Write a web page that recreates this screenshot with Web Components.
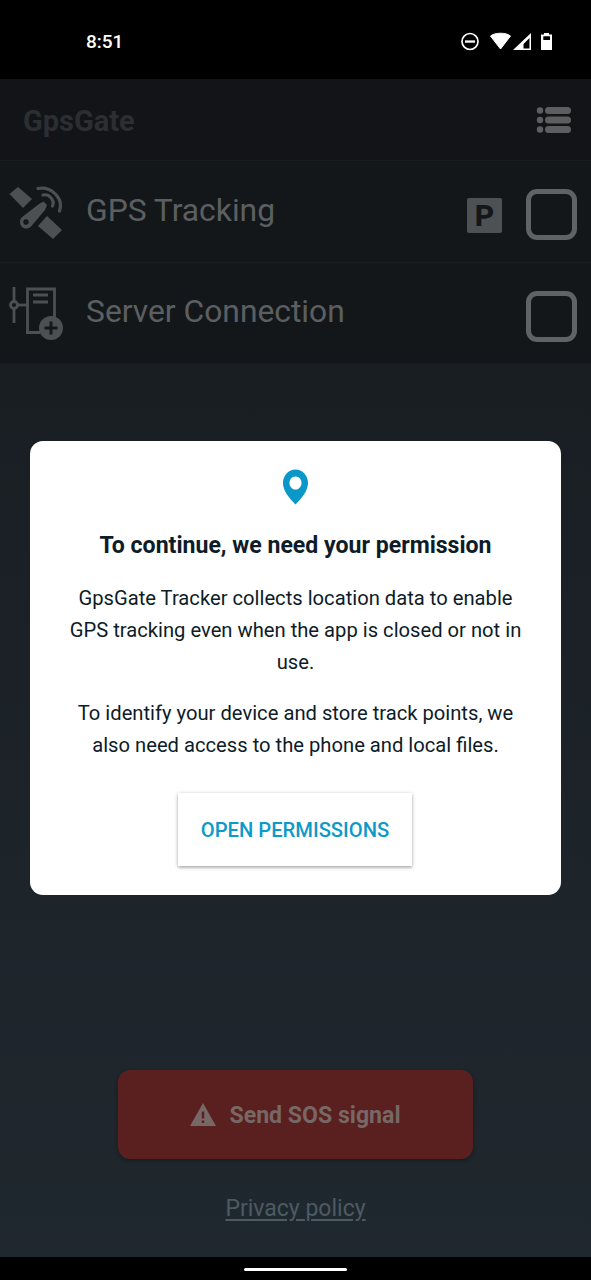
<!DOCTYPE html>
<html><head><meta charset="utf-8"><style>
html,body{margin:0;padding:0;background:#000}
body{width:591px;height:1280px;overflow:hidden;font-family:Roboto,sans-serif;position:relative}
</style></head><body>
<gg-app>
<gg-status slot="status"></gg-status>
<gg-header slot="header"></gg-header>
<gg-row slot="rows" label="GPS Tracking" kind="gps" parked></gg-row>
<gg-row slot="rows" label="Server Connection" kind="server"></gg-row>
<gg-sos slot="bottom"></gg-sos>
<gg-dialog slot="overlay"></gg-dialog>
</gg-app>
<script>
function def(name,html){customElements.define(name,class extends HTMLElement{connectedCallback(){if(this.shadowRoot)return;const r=this.attachShadow({mode:'open'});r.innerHTML=typeof html==='function'?html(this):html;}})}
def('gg-app',`<style>
:host{display:flex;flex-direction:column;width:591px;height:1280px;position:relative;background:#000}
main{flex:1;display:flex;flex-direction:column;background:linear-gradient(#191e23 0,#191e23 284px,#20282f 100%);min-height:0}
.rows{display:flex;flex-direction:column}
.sp{flex:1}
nav{height:23px;flex:none;background:#000;display:flex;justify-content:center;padding-top:11px;box-sizing:border-box}
nav i{display:block;width:103px;height:3px;border-radius:2px;background:#fff}
</style>
<slot name="status"></slot>
<main><slot name="header"></slot><div class="rows"><slot name="rows"></slot></div><div class="sp"></div><slot name="bottom"></slot></main>
<nav><i></i></nav>
<slot name="overlay"></slot>`);
def('gg-status',`<style>
:host{display:flex;height:79px;flex:none;background:#000;align-items:center;color:#fff;box-sizing:border-box;padding:0 36px 0 86px;justify-content:space-between;font:500 19px/24px Roboto,sans-serif}
span{position:relative;top:2px}
.ic{display:flex;align-items:center;position:relative;top:1.500px}
svg{display:block}
</style><span>8:51</span>
<div class="ic"><svg width="95" height="24" viewBox="0 0 95 24">
<circle cx="10" cy="12.500" r="8" fill="none" stroke="#fff" stroke-width="1.700"/><rect x="5" y="11.400" width="10" height="2.300" fill="#fff"/>
<path d="M30.500 7C35 3.300 46 3.300 50.500 7L40.500 20Z" fill="#fff" stroke="#fff" stroke-width="1" stroke-linejoin="round"/>
<path d="M53 21 71 4V21ZM63.500 19.500h6V9l-6 6Z" fill="#fff" fill-rule="evenodd"/>
<path d="M84 4h5v1.500h3V21H81V5.500h3ZM83.300 7.300V11H90V7.300Z" fill="#fff" fill-rule="evenodd"/>
</svg></div>`);
def('gg-header',`<style>
:host{display:flex;flex:none;height:82px;box-sizing:border-box;background:#121417;border-bottom:1px solid #191d21;align-items:center;justify-content:space-between;padding:0 20px 0 23px}
b{font:700 29px/34px Roboto,sans-serif;color:#2c2e31;position:relative;top:1px}
svg{display:block}
</style><b>GpsGate</b>
<svg width="36" height="28" viewBox="0 0 36 28"><g fill="#5c5e60"><circle cx="5" cy="4.500" r="3.200"/><circle cx="5" cy="14" r="3.200"/><circle cx="5" cy="23.500" r="3.200"/><rect x="10" y="1" width="26" height="7" rx="3.500"/><rect x="10" y="10.500" width="26" height="7" rx="3.500"/><rect x="10" y="20" width="26" height="7" rx="3.500"/></g></svg>`);
const ICONS={
gps:`<svg width="56" height="56" viewBox="0 0 56 56"><g fill="#4c5053">
<path d="M.5 9 9 2 23 14 14 23Z"/><path d="M29 41 38 31 53 45 44 54Z"/>
<path fill-rule="evenodd" d="M12.500 32.500 30 19 34.500 16.500 38 20 36 25 22 41.500C19 44.500 14.500 44 12.500 41.500 10.500 39 10.500 35 12.500 32.500ZM17 34.200a2.800 2.800 0 1 0 .01 0Z"/></g>
<g fill="none" stroke="#4c5053" stroke-width="3.200" stroke-linecap="round"><path d="M29 3.500C41 1 55 12 50.500 26"/><path d="M34 10C40 8.500 46 15 43.500 21"/></g></svg>`,
server:`<svg width="56" height="56" viewBox="0 0 56 56"><g fill="none" stroke="#4c5053" stroke-width="2.800">
<path d="M5 1v14.500M5 22.500V37"/><circle cx="5" cy="19" r="3.500"/><path d="M8.500 19H18"/>
<path d="M18.500 47V3H45.500V33M17 46.500H31"/></g>
<g fill="#4c5053"><rect x="24" y="7.500" width="15" height="3"/><rect x="24" y="14.500" width="15" height="3"/>
<circle cx="42" cy="42" r="12"/></g><path d="M42 35.500v13M35.500 42h13" stroke="#14181c" stroke-width="3"/></svg>`};
def('gg-row',h=>`<style>
:host{display:flex;flex:none;height:102px;box-sizing:border-box;background:#13171a;border-bottom:1px solid #191d21;align-items:center;position:relative;padding-left:9px}
:host(:last-of-type){height:100px;border-bottom:0}
.ico{width:56px;height:56px;flex:none;margin-top:2px;margin-right:21px}
svg{display:block}
.t{font:400 31.800px/40px Roboto,sans-serif;color:#5c5f61;flex:1;position:relative;top:-2px}
.p{width:35px;height:35px;border-radius:2px;background:#4d5154;color:#13171a;font:800 30px/35px Roboto,sans-serif;text-align:center;margin-right:24px;flex:none;position:relative;top:4px}
.c{width:41px;height:41px;border:5px solid #606264;border-radius:11px;margin-right:14px;flex:none;position:relative;top:3px}
</style><div class="ico">${ICONS[h.getAttribute('kind')]}</div><div class="t">${h.getAttribute('label')}</div>${h.hasAttribute('parked')?'<div class="p">P</div>':''}<div class="c"></div>`);
def('gg-sos',`<style>
:host{display:flex;flex-direction:column;align-items:center;flex:none;height:187px}
.b{width:355px;height:89px;border-radius:12px;background:#5a1f1f;box-shadow:0 2px 4px rgba(0,0,0,.3);display:flex;align-items:center;justify-content:center;gap:13px;color:#776866;font:700 23.100px/30px Roboto,sans-serif}
svg{display:block}
span{position:relative;top:1px}
a{margin-top:35px;font:400 23px/30px Roboto,sans-serif;color:#4c5b63;text-decoration:underline;text-underline-offset:3px}
</style><div class="b"><svg width="26" height="24" viewBox="0 0 26 24"><path fill-rule="evenodd" d="M13 0 26 23H0ZM11.800 8.500v7h2.400v-7ZM11.800 17.500v2.600h2.400v-2.600Z" fill="#776866"/></svg><span>Send SOS signal</span></div><a>Privacy policy</a>`);
def('gg-dialog',`<style>
:host{position:absolute;left:30px;top:441px;width:531px;height:454px;box-sizing:border-box;background:#fff;border-radius:13px;display:flex;flex-direction:column;align-items:center;padding-top:28px;color:#0d1c28;text-align:center}
svg{display:block;transform:translateX(-.5px)}
h1{margin:23px 0 0;font:700 23.100px/36px Roboto,sans-serif}
p{margin:0;font:400 20.200px/32px Roboto,sans-serif;width:470px}
.a{margin-top:18px}.d{margin-top:19px}
button{all:unset;box-sizing:border-box;margin:32px 1px 0 0;width:234px;height:73px;background:#fff;text-align:center;color:#0d9ac9;font:500 20.200px/75px Roboto,sans-serif;box-shadow:0 1px 4px rgba(0,0,0,.28),0 2px 2px rgba(0,0,0,.12)}
</style><svg width="26" height="36" viewBox="0 0 28 36" preserveAspectRatio="none"><path fill-rule="evenodd" d="M14 .500C6.500.500.500 6.500.500 14c0 7.500 6.500 15 13.500 21.500C21 29 27.500 21.500 27.500 14 27.500 6.500 21.500.500 14 .500ZM14 7.500a6.500 6.500 0 1 1-.01 0Z" fill="#0b98c8"/></svg>
<h1>To continue, we need your permission</h1>
<p class="a">GpsGate Tracker collects location data to enable GPS tracking even when the app is closed or not in use.</p>
<p class="d">To identify your device and store track points, we also need access to the phone and local files.</p>
<button>OPEN PERMISSIONS</button>`);
</script></body></html>
